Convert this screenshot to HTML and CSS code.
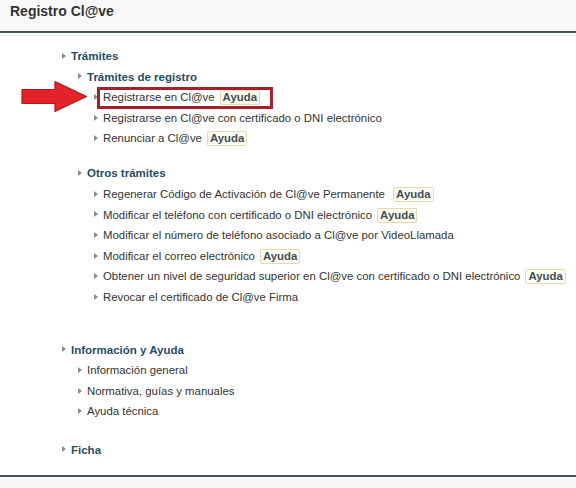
FILE: index.html
```html
<!DOCTYPE html>
<html lang="es">
<head>
<meta charset="utf-8">
<title>Registro Cl@ve</title>
<link rel="stylesheet" href="styles.css">
</head>
<body>
<header class="page-header">
  <h1 class="page-title">Registro Cl@ve</h1>
</header>
<div class="header-rule"></div>
<main class="content">
  <ul class="tree">
    <li class="group">
      <a class="head">Trámites</a>
      <ul class="sub">
        <li class="subgroup">
          <a class="head">Trámites de registro</a>
          <ul class="sub">
            <li><span class="hl">Registrarse en Cl@ve<span class="badge">Ayuda</span></span></li>
            <li>Registrarse en Cl@ve con certificado o DNI electrónico</li>
            <li>Renunciar a Cl@ve<span class="badge">Ayuda</span></li>
          </ul>
        </li>
        <li class="subgroup">
          <a class="head">Otros trámites</a>
          <ul class="sub">
            <li>Regenerar Código de Activación de Cl@ve Permanente&nbsp;<span class="badge">Ayuda</span></li>
            <li>Modificar el teléfono con certificado o DNI electrónico<span class="badge">Ayuda</span></li>
            <li>Modificar el número de teléfono asociado a Cl@ve por VideoLlamada</li>
            <li>Modificar el correo electrónico<span class="badge">Ayuda</span></li>
            <li>Obtener un nivel de seguridad superior en Cl@ve con certificado o DNI electrónico<span class="badge">Ayuda</span></li>
            <li>Revocar el certificado de Cl@ve Firma</li>
          </ul>
        </li>
      </ul>
    </li>
    <li class="group">
      <a class="head">Información y Ayuda</a>
      <ul class="sub">
        <li>Información general</li>
        <li>Normativa, guías y manuales</li>
        <li>Ayuda técnica</li>
      </ul>
    </li>
    <li class="group">
      <a class="head">Ficha</a>
    </li>
  </ul>
  <svg class="arrow" width="68" height="34" viewBox="0 0 68 34" aria-hidden="true">
    <path d="M1 9.5 L34 9.5 L34 1.5 L65.5 16.5 L34 31.5 L34 23.5 L1 23.5 Z" fill="#e3222a" stroke="#b5161d" stroke-width="1.2" stroke-linejoin="round"/>
  </svg>
</main>
<footer class="page-footer"></footer>
</body>
</html>
```
FILE: styles.css
```css
html, body {
  margin: 0;
  padding: 0;
}
body {
  width: 576px;
  height: 488px;
  display: flex;
  flex-direction: column;
  background: #ffffff;
  font-family: "Liberation Sans", Arial, sans-serif;
  font-size: 11.4px;
  color: #333333;
  overflow: hidden;
}
.page-header {
  flex: none;
  background: #f8f8f8;
  border-bottom: 2px solid #46545a;
  padding: 2px 0 0 10px;
  box-sizing: border-box;
  height: 33px;
}
.page-title {
  margin: 0;
  font-size: 14px;
  line-height: 18px;
  font-weight: bold;
  color: #333333;
}
.header-rule {
  flex: none;
  height: 1px;
  margin-top: 2px;
  background: #e2e9eb;
}
.content {
  flex: 1 1 0;
  min-height: 0;
  position: relative;
  padding-top: 10px;
}
.tree, .sub {
  list-style: none;
  margin: 0;
}
.tree {
  padding: 0 0 0 62px;
}
.sub {
  padding: 0 0 0 7px;
}
.tree li {
  position: relative;
  padding-left: 9px;
  line-height: 20.6px;
  white-space: nowrap;
}
.tree li::before {
  content: "";
  position: absolute;
  left: 0;
  top: 6.8px;
  border-style: solid;
  border-width: 3.5px 0 3.5px 4px;
  border-color: transparent transparent transparent #8a8a8a;
}
.group {
  margin-bottom: 17.5px;
}
.subgroup > .sub {
  padding-bottom: 14.5px;
}
.head {
  font-weight: bold;
  font-size: 11.5px;
  color: #1f4d67;
  text-decoration: none;
}
.badge {
  display: inline-block;
  margin-left: 5px;
  padding: 0 2px;
  border: 1px solid #e3dab4;
  border-radius: 2px;
  background: #fffdf1;
  font-weight: bold;
  color: #3f4e56;
  line-height: 13px;
}
.hl {
  position: relative;
  display: inline-block;
}
.hl::after {
  content: "";
  position: absolute;
  left: -6px;
  right: -13px;
  top: 0;
  bottom: -1px;
  border: 3px solid #a3222a;
}
.arrow {
  position: absolute;
  left: 21px;
  top: 44px;
}
.page-footer {
  flex: none;
  height: 11px;
  background: #f6f7f7;
  border-top: 2px solid #46545a;
}
```
